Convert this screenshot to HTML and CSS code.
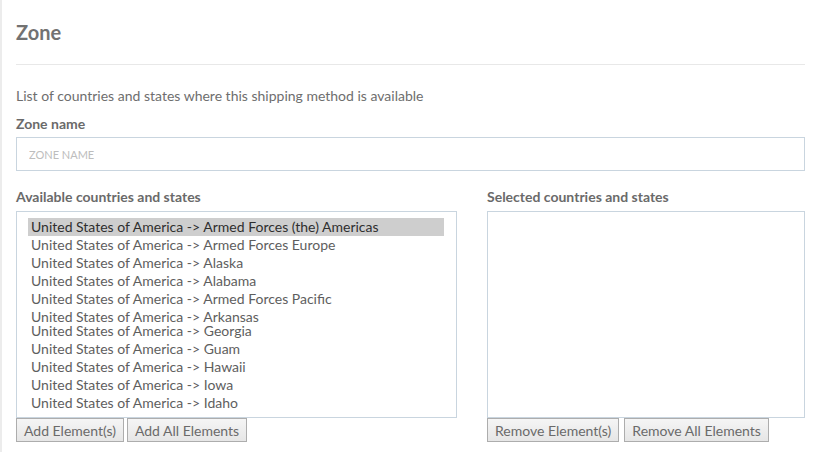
FILE: index.html
```html
<!DOCTYPE html>
<html lang="en">
<head>
  <meta charset="UTF-8" />
  <title>Zone</title>
  <link rel="stylesheet" href="styles.css">
</head>
<body>
  <div class="panel">
    <h2 class="title">Zone</h2>
    <hr class="sep">
    <p class="hint">List of countries and states where this shipping method is available</p>
    <label class="lbl" for="zoneName">Zone name</label>
    <input type="text" id="zoneName" class="text-input" placeholder="ZONE NAME">

    <div class="picker">
      <div class="col">
        <div class="lbl">Available countries and states</div>
        <div class="list">
          <div class="opt selected">United States of America -&gt; Armed Forces (the) Americas</div>
          <div class="opt">United States of America -&gt; Armed Forces Europe</div>
          <div class="opt">United States of America -&gt; Alaska</div>
          <div class="opt">United States of America -&gt; Alabama</div>
          <div class="opt">United States of America -&gt; Armed Forces Pacific</div>
          <div class="opt tight">United States of America -&gt; Arkansas</div>
          <div class="opt">United States of America -&gt; Georgia</div>
          <div class="opt">United States of America -&gt; Guam</div>
          <div class="opt">United States of America -&gt; Hawaii</div>
          <div class="opt">United States of America -&gt; Iowa</div>
          <div class="opt">United States of America -&gt; Idaho</div>
        </div>
        <div class="actions">
          <button class="btn">Add Element(s)</button>
          <button class="btn">Add All Elements</button>
        </div>
      </div>
      <div class="col">
        <div class="lbl">Selected countries and states</div>
        <div class="list"></div>
        <div class="actions">
          <button class="btn">Remove Element(s)</button>
          <button class="btn">Remove All Elements</button>
        </div>
      </div>
    </div>
  </div>
</body>
</html>
```

FILE: styles.css
```css
* { box-sizing: border-box; }
html, body {
  margin: 0;
  padding: 0;
  background: #fff;
  font-family: Lato, "Open Sans", Arial, sans-serif;
  color: #666;
}
.panel {
  border-left: 2px solid #ececec;
  min-height: 452px;
  padding: 20px 11px 0 14px;
}
.title {
  margin: 0;
  font-size: 20px;
  font-weight: bold;
  color: #727272;
  line-height: 24px;
}
.sep {
  border: none;
  border-top: 1px solid #e8e8e8;
  margin: 20px 0 0;
}
.hint {
  margin: 22px 0 0;
  font-size: 14px;
  line-height: 17px;
  color: #6e6e6e;
}
.lbl {
  display: block;
  margin-top: 11px;
  font-size: 14px;
  font-weight: bold;
  line-height: 17px;
  color: #6a6a6a;
}
.text-input {
  display: block;
  width: 100%;
  height: 34px;
  margin-top: 5px;
  padding: 0 12px;
  border: 1px solid #c9d5df;
  font-family: inherit;
  font-size: 11px;
  color: #555;
}
.text-input::placeholder { color: #bdbdbd; }
.picker {
  display: grid;
  grid-template-columns: 441px 1fr;
  gap: 30px;
  margin-top: 6px;
}
.picker .lbl { margin-top: 11px; }
.list {
  margin-top: 6px;
  height: 207px;
  border: 1px solid #c9d5df;
  padding: 6px 12px 0 11px;
  overflow: hidden;
}
.opt {
  font-size: 14px;
  line-height: 18px;
  height: 18px;
  padding-left: 3px;
  color: #5e5e5e;
  white-space: nowrap;
}
.opt.tight { height: 14px; }
.opt.selected {
  background: #cecece;
  color: #2e2e2e;
}
.actions {
  display: flex;
  gap: 3px;
}
.btn {
  height: 24px;
  padding: 0 7px;
  font-family: inherit;
  font-size: 14px;
  color: #6a6a6a;
  border: 1px solid #adadad;
  background: linear-gradient(#f5f5f5, #e6e6e6);
}
.col:last-child .actions { gap: 5px; }
```
